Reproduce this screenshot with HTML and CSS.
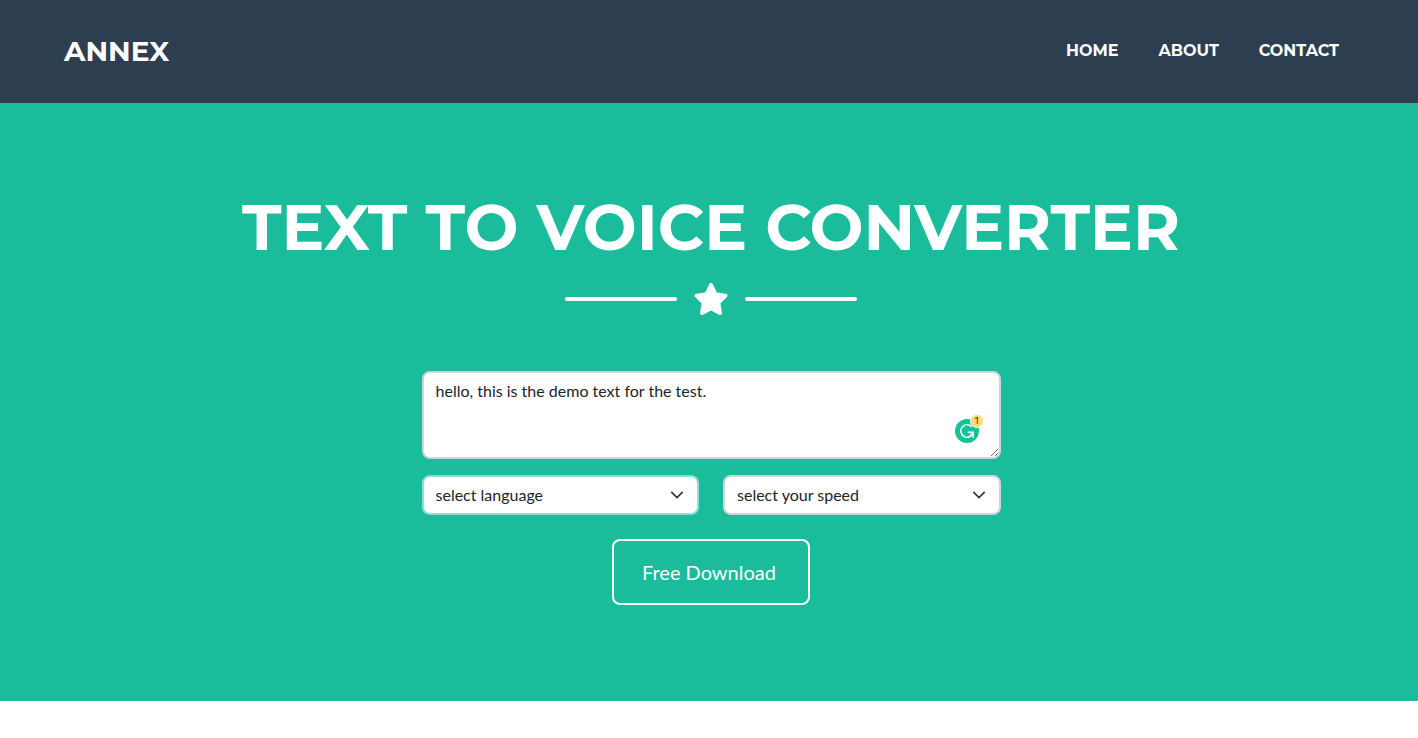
FILE: index.html
```html
<!DOCTYPE html>
<html lang="en">
<head>
<meta charset="utf-8">
<meta name="viewport" content="width=device-width, initial-scale=1">
<title>Annex - Text to Voice Converter</title>
<link rel="stylesheet" href="styles.css">
</head>
<body>
<header class="navbar">
  <a class="brand" href="#">ANNEX</a>
  <nav class="menu">
    <a class="menu-link" href="#">HOME</a>
    <a class="menu-link" href="#about">ABOUT</a>
    <a class="menu-link" href="#contact">CONTACT</a>
  </nav>
</header>
<main class="masthead">
  <h1 class="title">TEXT TO VOICE CONVERTER</h1>
  <div class="divider">
    <span class="divider-line"></span>
    <svg class="star" viewBox="0 0 576 512" aria-hidden="true"><path fill="currentColor" d="M316.900 18C311.600 7 300.400 0 288.100 0s-23.400 7-28.800 18L195 150.300 51.400 171.500c-12 1.800-22 10.200-25.700 21.700s-.7 24.200 7.900 32.700L137.800 329 113.200 474.700c-2 12 3 24.200 12.900 31.300s23 8 33.800 2.300l128.300-68.500 128.300 68.500c10.800 5.700 23.900 4.900 33.800-2.300s14.900-19.300 12.900-31.300L438.500 329 542.700 225.900c8.600-8.500 11.700-21.200 7.900-32.700s-13.700-19.900-25.700-21.700L381.200 150.300z"/></svg>
    <span class="divider-line"></span>
  </div>
  <form class="converter">
    <div class="text-field">
      <textarea class="control textarea" aria-label="Text to convert" spellcheck="false">hello, this is the demo text for the test.</textarea>
      <div class="checker">
        <svg class="checker-logo" viewBox="0 0 24 24" aria-hidden="true">
          <circle cx="12" cy="12" r="12" fill="#15c39a"/>
          <path d="M16.500 7.400A6.300 6.300 0 1 0 14.600 17.800" fill="none" stroke="#fff" stroke-width="1.600" stroke-linecap="round"/>
          <path d="M12.800 13.400H18V18.600" fill="none" stroke="#fff" stroke-width="1.600"/>
          <path d="M17.800 13.600Q16.900 16.300 14.600 17.800" fill="none" stroke="#fff" stroke-width="1.600"/>
        </svg>
        <span class="checker-count">1</span>
      </div>
    </div>
    <div class="options">
      <div class="select-field">
        <select class="control select select-active" aria-label="Language">
          <option>select language</option>
        </select>
        <svg class="chevron" viewBox="0 0 16 16" aria-hidden="true"><path d="m2 5 6 6 6-6" fill="none" stroke="#343a40" stroke-width="2" stroke-linecap="round" stroke-linejoin="round"/></svg>
      </div>
      <div class="select-field">
        <select class="control select" aria-label="Speed">
          <option>select your speed</option>
        </select>
        <svg class="chevron" viewBox="0 0 16 16" aria-hidden="true"><path d="m2 5 6 6 6-6" fill="none" stroke="#343a40" stroke-width="2" stroke-linecap="round" stroke-linejoin="round"/></svg>
      </div>
    </div>
    <button class="download" type="button">Free Download</button>
  </form>
</main>
</body>
</html>
```
FILE: styles.css
```css
* {
  box-sizing: border-box;
}

body {
  margin: 0;
  background: #fff;
  color: #212529;
  font-family: Lato, sans-serif;
  font-size: 16px;
  line-height: 24px;
}

.navbar {
  display: flex;
  align-items: center;
  justify-content: space-between;
  padding: 28px 79px 28px 64px;
  background: #2c3e50;
  font-family: Montserrat, Inter, sans-serif;
  font-weight: 700;
}

.brand {
  color: #fff;
  font-size: 28px;
  line-height: 47px;
  text-decoration: none;
}

.menu {
  display: flex;
  gap: 40px;
  padding-bottom: 2px;
}

.menu-link {
  color: #fff;
  font-size: 16px;
  text-decoration: none;
}

.masthead {
  display: flex;
  flex-direction: column;
  align-items: center;
  padding: 96px 0 96px 4px;
  background: #1abc9c;
  color: #fff;
}

.title {
  margin: 0;
  font-family: Montserrat, Inter, sans-serif;
  font-size: 64px;
  font-weight: 700;
  line-height: 56px;
  text-align: center;
}

.divider {
  display: flex;
  align-items: center;
  gap: 16px;
  margin: 28px 0 56px;
}

.divider-line {
  width: 112px;
  height: 4px;
  border-radius: 4px;
  background: #fff;
}

.star {
  width: 36px;
  height: 32px;
}

.converter {
  display: flex;
  flex-direction: column;
  width: 100%;
  max-width: 579px;
}

.text-field {
  position: relative;
  display: flex;
}

.control {
  width: 100%;
  border: 2px solid #ced4da;
  border-radius: 8px;
  background: #fff;
  color: #212529;
  font-family: Lato, sans-serif;
  font-size: 16px;
  line-height: 24px;
}

.textarea {
  height: 88px;
  padding: 6px 12px;
  resize: vertical;
}

.checker {
  position: absolute;
  right: 22px;
  bottom: 16px;
}

.checker-logo {
  display: block;
  width: 24px;
  height: 24px;
}

.checker-count {
  position: absolute;
  top: -5px;
  right: -5px;
  width: 14px;
  height: 14px;
  border: 1px solid #fff;
  border-radius: 50%;
  background: #ffd97a;
  color: #5c4510;
  font-family: Inter, sans-serif;
  font-size: 9px;
  font-weight: 500;
  line-height: 12px;
  text-align: center;
}

.options {
  display: grid;
  grid-template-columns: 1fr 1fr;
  gap: 24px;
  margin-top: 16px;
}

.select-field {
  display: grid;
  align-items: center;
}

.select-field > * {
  grid-area: 1 / 1;
}

.select {
  height: 40px;
  padding: 0 36px 0 12px;
  appearance: none;
}

.select-active {
  border-color: #8ddece;
}

.chevron {
  justify-self: end;
  width: 14px;
  height: 14px;
  margin-right: 15px;
  pointer-events: none;
}

.download {
  align-self: center;
  margin-top: 24px;
  padding: 16px 32px 16px 28px;
  border: 2px solid #fff;
  border-radius: 8px;
  background: transparent;
  color: #fff;
  font-family: Lato, sans-serif;
  font-size: 20px;
  line-height: 30px;
}
```
